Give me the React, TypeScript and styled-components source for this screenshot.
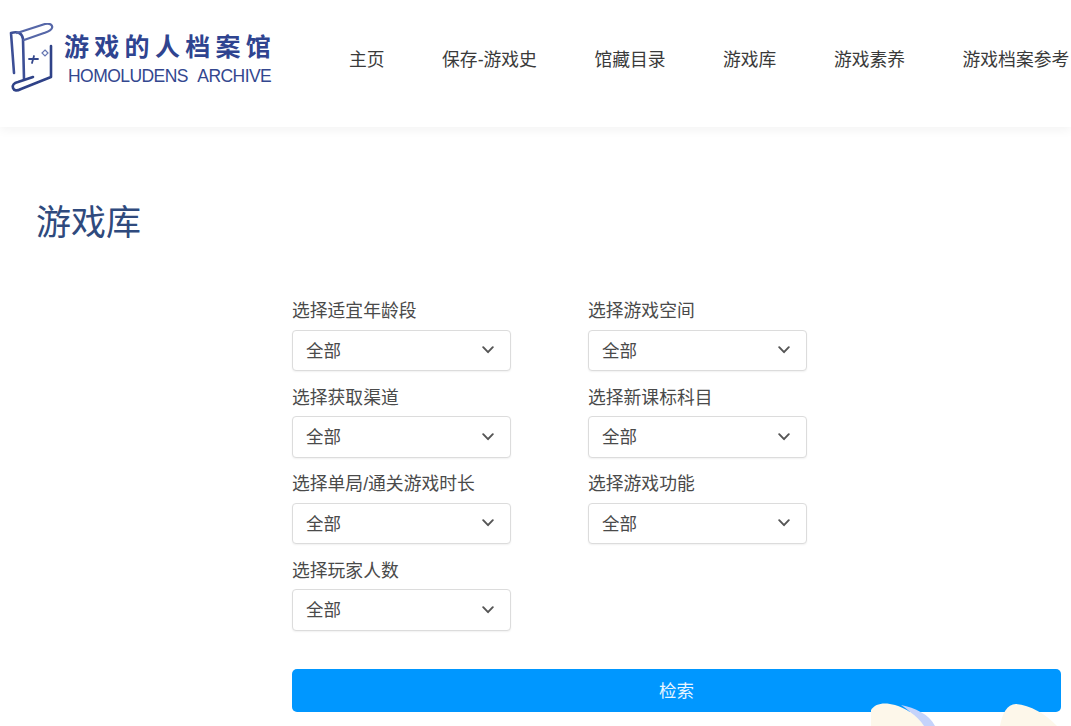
import React from 'react';
import styled, {createGlobalStyle} from "styled-components";

const CJK = `"Liberation Sans", "Noto Sans CJK SC", sans-serif`;

const GlobalStyle = createGlobalStyle`
  html, body {
    margin: 0;
    padding: 0;
    height: 726px;
    overflow: hidden;
    background: #fff;
    font-family: ${CJK};
  }
`

const navItems = ["主页", "保存-游戏史", "馆藏目录", "游戏库", "游戏素养", "游戏档案参考"];

const leftFilters = ["选择适宜年龄段", "选择获取渠道", "选择单局/通关游戏时长", "选择玩家人数"];
const rightFilters = ["选择游戏空间", "选择新课标科目", "选择游戏功能"];

const Filter = ({label}: { label: string }) => {
    return (
        <Field>
            <FieldLabel>{label}</FieldLabel>
            <SelectBox>
                <SelectValue>全部</SelectValue>
                <svg width="12" height="8" viewBox="0 0 12 8" fill="none">
                    <path d="M1.2 1.2 L6 6.2 L10.8 1.2" stroke="#555" strokeWidth="1.9" strokeLinecap="round" strokeLinejoin="round"/>
                </svg>
            </SelectBox>
        </Field>
    );
};

const LogoMark = () => {
    return (
        <svg width="46" height="72" viewBox="0 0 46 72" fill="none">
            <path d="M2 10 L5 50 M2 10 C9 8 13 10 14 16 L15 56" stroke="#3c4f96" strokeWidth="2.6" strokeLinecap="round"/>
            <path d="M8 10 L36 1 C41 0 44 2 43 5 C42 8 38 9 35 10 L15 17" stroke="#5667a8" strokeWidth="2.2" strokeLinecap="round" strokeLinejoin="round"/>
            <path d="M42 23 L42 54 L12 66 C8 68 5 68 4 65 C3 62 5 60 9 59 L24 54" stroke="#2f4288" strokeWidth="2.6" strokeLinecap="round" strokeLinejoin="round"/>
            <path d="M20 36 L29 36 M25 33 L23 40" stroke="#34478c" strokeWidth="1.8" strokeLinecap="round"/>
            <path d="M36 27 L39 30 L36 33 L33 30 Z" stroke="#6576b2" strokeWidth="1.2"/>
        </svg>
    );
};

const App = () => {
    return (
        <Page>
            <GlobalStyle/>
            <Header>
                <Logo>
                    <LogoMark/>
                    <LogoText>
                        <LogoTitle>游戏的人档案馆</LogoTitle>
                        <LogoSub>HOMOLUDENS ARCHIVE</LogoSub>
                    </LogoText>
                </Logo>
                <Nav>
                    {navItems.map(item => <NavItem key={item}>{item}</NavItem>)}
                </Nav>
            </Header>
            <Main>
                <PageTitle>游戏库</PageTitle>
                <SearchForm>
                    <Columns>
                        <Column>
                            {leftFilters.map(label => <Filter key={label} label={label}/>)}
                        </Column>
                        <Column>
                            {rightFilters.map(label => <Filter key={label} label={label}/>)}
                        </Column>
                    </Columns>
                    <SearchButton>检索</SearchButton>
                </SearchForm>
            </Main>
            <Blob $left={871} viewBox="0 0 65 24" width="65" height="24">
                <path d="M30 3 C44 6 58 12 64 24 L48 24 C44 14 38 8 30 3 Z" fill="#c5d3fb"/>
                <path d="M0 24 L0 8 C4 1 14 0 24 3 C34 6 46 13 53 24 Z" fill="#fdf7ea"/>
            </Blob>
            <Blob $left={1000} viewBox="0 0 62 24" width="62" height="24">
                <path d="M0 24 C2 12 7 2 16 2 C30 3 46 12 57 24 Z" fill="#fdf7ea"/>
            </Blob>
        </Page>
    );
};

export default App;

const Page = styled.div`
  position: relative;
  width: 1071px;
  height: 726px;
  overflow: hidden;
  background: #fff;
`

const Header = styled.header`
  display: flex;
  align-items: center;
  height: 127px;
  padding: 0 0 9px 9px;
  box-sizing: border-box;
  background: #fff;
  box-shadow: 0 3px 10px rgba(0, 0, 0, 0.05);
  white-space: nowrap;
`

const Logo = styled.div`
  display: flex;
  align-items: center;
  gap: 9px;
  width: 340px;
  flex-shrink: 0;
`

const LogoText = styled.div`
  display: flex;
  flex-direction: column;
  gap: 2px;
`

const LogoTitle = styled.span`
  font-size: 25px;
  line-height: 32px;
  font-weight: 700;
  letter-spacing: 5.3px;
  color: #2f4490;
`

const LogoSub = styled.span`
  padding-left: 4px;
  font-family: "Liberation Sans", sans-serif;
  font-size: 17.5px;
  line-height: 22px;
  letter-spacing: -0.55px;
  word-spacing: 6px;
  color: #33478f;
`

const Nav = styled.nav`
  display: flex;
  gap: 57.5px;
  padding-top: 2px;
`

const NavItem = styled.a`
  font-size: 17.8px;
  line-height: 24px;
  color: #3a3a3a;
`

const Main = styled.main`
  padding: 74px 10px 0 36px;
`

const PageTitle = styled.h1`
  margin: 0;
  font-size: 35px;
  line-height: 44px;
  font-weight: 400;
  color: #2f4a7d;
`

const SearchForm = styled.form`
  display: flex;
  flex-direction: column;
  margin: 54px 0 0 256px;
`

const Columns = styled.div`
  display: flex;
  gap: 77px;
`

const Column = styled.div`
  display: flex;
  flex-direction: column;
  gap: 14.5px;
  width: 219px;
`

const Field = styled.div`
  display: flex;
  flex-direction: column;
  gap: 6.5px;
`

const FieldLabel = styled.label`
  font-size: 17.8px;
  line-height: 24px;
  color: #4a4a4a;
  white-space: nowrap;
`

const SelectBox = styled.div`
  display: flex;
  align-items: center;
  justify-content: space-between;
  height: 41.5px;
  padding: 0 16px 0 13px;
  box-sizing: border-box;
  background: #fff;
  border: 1px solid #dcdcdc;
  border-radius: 4px;
  box-shadow: 0 1px 2px rgba(0, 0, 0, 0.06);
  font-size: 17.5px;
  color: #4a4a4a;
`

const SelectValue = styled.span`
  margin-top: -2px;
`

const SearchButton = styled.button`
  width: 769px;
  height: 43px;
  margin-top: 38px;
  padding: 0 0 2px;
  border: none;
  border-radius: 5px;
  background: #0097ff;
  color: #e8f5ff;
  font-family: inherit;
  font-size: 17.5px;
`

const Blob = styled.svg<{ $left: number }>`
  position: absolute;
  left: ${props => props.$left}px;
  top: 702px;
`
